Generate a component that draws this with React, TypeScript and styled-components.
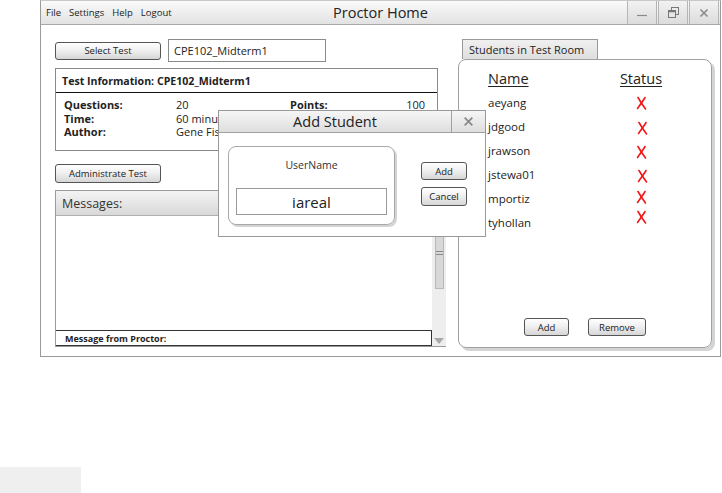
import React from "react";
import styled, { createGlobalStyle } from "styled-components";

const students = [
  { name: "aeyang", nudge: 2, shift: 0 },
  { name: "jdgood", nudge: 3, shift: 1 },
  { name: "jrawson", nudge: 3, shift: 0 },
  { name: "jstewa01", nudge: 3, shift: 1 },
  { name: "mportiz", nudge: 0, shift: 0 },
  { name: "tyhollan", nudge: -4, shift: 0 },
];

const GlobalStyle = createGlobalStyle`
  body {
    margin: 0;
    background: #ffffff;
    font-family: "Open Sans", "DejaVu Sans", sans-serif;
    color: #222;
  }
`;

const Page = styled.div`
  width: 722px;
  height: 493px;
  position: relative;
  overflow: hidden;
`;

const Window = styled.div`
  position: relative;
  margin-left: 40px;
  width: 681px;
  height: 357px;
  box-sizing: border-box;
  border: 1px solid #9a9a9a;
  border-top-color: #c8c8c8;
  background: #fff;
`;

const TitleBar = styled.div`
  height: 23px;
  display: grid;
  grid-template-columns: 1fr auto 1fr;
  background: linear-gradient(#fafafa, #e2e2e2);
  border-bottom: 1px solid #a8a8a8;
`;

const Menu = styled.div`
  display: flex;
  align-items: center;
  gap: 8px;
  padding-left: 5px;
  font-size: 9.5px;
  color: #222;
`;

const Title = styled.div`
  display: flex;
  align-items: center;
  justify-content: center;
  font-size: 14.5px;
  color: #222;
`;

const Controls = styled.div`
  justify-self: end;
  display: flex;
  gap: 1px;
  padding-right: 1px;
`;

const ControlButton = styled.div`
  width: 28px;
  display: flex;
  align-items: center;
  justify-content: center;
  border-left: 1px solid #b5b5b5;
  border-right: 1px solid #b5b5b5;
  background: linear-gradient(#f2f2f2, #dcdcdc);
`;

const Body = styled.div`
  display: flex;
  gap: 12px;
  padding: 14px 0 0 14px;
`;

const LeftCol = styled.div`
  width: 391px;
  display: flex;
  flex-direction: column;
`;

const TopRow = styled.div`
  display: flex;
  align-items: center;
  gap: 7px;
  height: 23px;
`;

const Button = styled.div<{ $w: number; $h?: number }>`
  width: ${(p) => p.$w}px;
  height: ${(p) => p.$h ?? 18}px;
  box-sizing: border-box;
  border: 1px solid #555;
  border-radius: 3px;
  background: linear-gradient(#ffffff 0%, #f0f0f0 45%, #d6d6d6 100%);
  display: flex;
  align-items: center;
  justify-content: center;
  font-size: 9.5px;
  color: #222;
`;

const TextInput = styled.div`
  width: 158px;
  height: 23px;
  box-sizing: border-box;
  border: 1px solid #8a8a8a;
  display: flex;
  align-items: center;
  padding-left: 5px;
  font-size: 11px;
`;

const InfoBox = styled.div`
  margin-top: 6px;
  width: 383px;
  height: 83px;
  box-sizing: border-box;
  border: 1px solid #8a8a8a;
`;

const InfoHeader = styled.div`
  height: 24px;
  box-sizing: border-box;
  border-bottom: 1px solid #111;
  display: flex;
  align-items: center;
  padding-left: 6px;
  font-weight: 700;
  font-size: 10.6px;
`;

const InfoGrid = styled.div`
  display: grid;
  grid-template-columns: 112px 114px 1fr auto;
  padding: 5px 12px 0 8px;
  font-size: 11px;
  line-height: 13.5px;
`;

const Label = styled.span`
  font-weight: 700;
`;

const Admin = styled.div`
  margin-top: 13px;
`;

const Messages = styled.div`
  margin-top: 7px;
  height: 157px;
  box-sizing: border-box;
  border: 1px solid #9a9a9a;
  border-right: none;
  display: flex;
  flex-direction: column;
`;

const MessagesHeader = styled.div`
  height: 24px;
  flex: none;
  background: linear-gradient(#f4f4f4, #d8d8d8);
  border-bottom: 1px solid #b0b0b0;
  display: flex;
  align-items: center;
  padding-left: 6px;
  font-size: 12.5px;
  color: #333;
`;

const MessagesBody = styled.div`
  flex: 1;
  display: flex;
`;

const MessagesMain = styled.div`
  flex: 1;
  display: flex;
  flex-direction: column;
  justify-content: flex-end;
`;

const ProctorInput = styled.div`
  height: 16px;
  box-sizing: border-box;
  border: 1px solid #333;
  border-left: none;
  display: flex;
  align-items: center;
  padding-left: 9px;
  font-size: 9px;
  font-weight: 700;
`;

const ScrollTrack = styled.div`
  width: 14px;
  background: #eeeeee;
  display: flex;
  flex-direction: column;
  align-items: center;
`;

const ScrollThumb = styled.div`
  margin-top: 1px;
  width: 9px;
  height: 72px;
  box-sizing: border-box;
  border: 1px solid #b8b8b8;
  background: #d8d8d8;
  display: flex;
  flex-direction: column;
  justify-content: center;
  gap: 2px;
  align-items: center;
`;

const Grip = styled.div`
  width: 7px;
  height: 1px;
  background: #888;
`;

const ScrollArrow = styled.div`
  margin-top: auto;
  margin-bottom: 2px;
  width: 0;
  height: 0;
  border-left: 5px solid transparent;
  border-right: 5px solid transparent;
  border-top: 6px solid #a8a8a8;
`;

const RightCol = styled.div`
  width: 254px;
  display: flex;
  flex-direction: column;
`;

const Tab = styled.div`
  margin-left: 4px;
  width: 136px;
  height: 20px;
  box-sizing: border-box;
  border: 1px solid #999;
  border-bottom: none;
  background: linear-gradient(#f0f0f0, #dedede);
  display: flex;
  align-items: center;
  padding-left: 6px;
  font-size: 11px;
  color: #222;
`;

const Panel = styled.div`
  height: 289px;
  box-sizing: border-box;
  border: 1px solid #a0a0a0;
  border-radius: 8px;
  box-shadow: 3px 3px 0 #d4d4d4;
  display: flex;
  flex-direction: column;
  padding: 7px 0 11px 29px;
`;

const StudentGrid = styled.div`
  display: grid;
  grid-template-columns: 131px 44px;
  grid-template-rows: 23px;
  grid-auto-rows: 24px;
  font-size: 11.5px;
  align-items: center;
`;

const ColHead = styled.div<{ $center?: boolean }>`
  font-size: 14.5px;
  text-decoration: underline;
  text-underline-offset: 2px;
  text-align: ${(p) => (p.$center ? "center" : "left")};
`;

const Status = styled.div<{ $nudge: number; $shift: number }>`
  display: flex;
  justify-content: center;
  transform: translate(${(p) => p.$shift}px, ${(p) => p.$nudge - 1}px);
`;

const PanelButtons = styled.div`
  margin-top: auto;
  display: flex;
  gap: 19px;
  justify-content: center;
  padding-right: 29px;
`;

const Dialog = styled.div`
  position: absolute;
  left: 177px;
  top: 109px;
  width: 268px;
  height: 127px;
  box-sizing: border-box;
  border: 1px solid #999;
  background: #fff;
  display: flex;
  flex-direction: column;
`;

const DialogBar = styled.div`
  height: 21px;
  display: flex;
  background: linear-gradient(#f6f6f6, #dedede);
  border-bottom: 1px solid #a0a0a0;
`;

const DialogTitle = styled.div`
  flex: 1;
  display: flex;
  align-items: center;
  justify-content: center;
  font-size: 14.5px;
  color: #222;
`;

const DialogClose = styled.div`
  width: 33px;
  border-left: 1px solid #a0a0a0;
  display: flex;
  align-items: center;
  justify-content: center;
`;

const DialogBody = styled.div`
  display: flex;
  padding: 13px 0 0 9px;
`;

const FieldBox = styled.div`
  width: 167px;
  height: 79px;
  box-sizing: border-box;
  border: 1px solid #a8a8a8;
  border-radius: 8px;
  box-shadow: 2px 2px 0 #d4d4d4;
  display: flex;
  flex-direction: column;
  align-items: center;
  padding-top: 11px;
`;

const FieldLabel = styled.div`
  font-size: 10.5px;
  color: #333;
  height: 20px;
`;

const FieldInput = styled.div`
  margin-top: 10px;
  width: 151px;
  height: 27px;
  box-sizing: border-box;
  border: 1px solid #999;
  display: flex;
  align-items: center;
  justify-content: center;
  font-size: 15px;
  color: #222;
`;

const DialogButtons = styled.div`
  margin-left: 26px;
  padding-top: 16px;
  display: flex;
  flex-direction: column;
  gap: 7px;
`;

const Stub = styled.div`
  position: absolute;
  left: 0;
  top: 467px;
  width: 81px;
  height: 26px;
  background: #efefef;
`;

const RedX = () => (
  <svg width="11" height="14" viewBox="0 0 11 14">
    <path d="M2 1.5 C4 5, 6.5 9, 9.5 13" stroke="#f01818" strokeWidth="1.6" fill="none" strokeLinecap="round" />
    <path d="M9 1.5 C7 5, 4 9, 1.5 12.5" stroke="#f01818" strokeWidth="1.6" fill="none" strokeLinecap="round" />
  </svg>
);

const CloseGlyph = ({ size = 10 }: { size?: number }) => (
  <svg width={size} height={size} viewBox="0 0 10 10">
    <path d="M1.5 1.5 L8.5 8.5 M8.5 1.5 L1.5 8.5" stroke="#8a8a8a" strokeWidth="1.6" />
  </svg>
);

export default function App() {
  return (
    <Page>
      <GlobalStyle />
      <Window>
        <TitleBar>
          <Menu>
            <span>File</span>
            <span>Settings</span>
            <span>Help</span>
            <span>Logout</span>
          </Menu>
          <Title>Proctor Home</Title>
          <Controls>
            <ControlButton>
              <svg width="10" height="10" viewBox="0 0 10 10">
                <path d="M0 7.5 H10" stroke="#8a8a8a" strokeWidth="1.2" />
              </svg>
            </ControlButton>
            <ControlButton>
              <svg width="11" height="11" viewBox="0 0 11 11">
                <rect x="3.5" y="0.5" width="7" height="7" fill="none" stroke="#777" />
                <rect x="0.5" y="3.5" width="7" height="7" fill="#e6e6e6" stroke="#777" />
                <path d="M0.5 4.5 H7.5" stroke="#777" strokeWidth="1.5" />
              </svg>
            </ControlButton>
            <ControlButton>
              <CloseGlyph />
            </ControlButton>
          </Controls>
        </TitleBar>

        <Body>
          <LeftCol>
            <TopRow>
              <Button $w={106}>Select Test</Button>
              <TextInput>CPE102_Midterm1</TextInput>
            </TopRow>
            <InfoBox>
              <InfoHeader>Test Information: CPE102_Midterm1</InfoHeader>
              <InfoGrid>
                <Label>Questions:</Label>
                <span>20</span>
                <Label>Points:</Label>
                <span>100</span>
                <Label>Time:</Label>
                <span>60 minutes</span>
                <span />
                <span />
                <Label>Author:</Label>
                <span>Gene Fisher</span>
                <span />
                <span />
              </InfoGrid>
            </InfoBox>
            <Admin>
              <Button $w={106} $h={19}>Administrate Test</Button>
            </Admin>
            <Messages>
              <MessagesHeader>Messages:</MessagesHeader>
              <MessagesBody>
                <MessagesMain>
                  <ProctorInput>Message from Proctor:</ProctorInput>
                </MessagesMain>
                <ScrollTrack>
                  <ScrollThumb>
                    <Grip />
                    <Grip />
                  </ScrollThumb>
                  <ScrollArrow />
                </ScrollTrack>
              </MessagesBody>
            </Messages>
          </LeftCol>

          <RightCol>
            <Tab>Students in Test Room</Tab>
            <Panel>
              <StudentGrid>
                <ColHead>Name</ColHead>
                <ColHead $center>Status</ColHead>
                {students.map((s) => (
                  <React.Fragment key={s.name}>
                    <div>{s.name}</div>
                    <Status $nudge={s.nudge} $shift={s.shift}>
                      <RedX />
                    </Status>
                  </React.Fragment>
                ))}
              </StudentGrid>
              <PanelButtons>
                <Button $w={45}>Add</Button>
                <Button $w={58}>Remove</Button>
              </PanelButtons>
            </Panel>
          </RightCol>
        </Body>

        <Dialog>
          <DialogBar>
            <DialogTitle>Add Student</DialogTitle>
            <DialogClose>
              <CloseGlyph size={11} />
            </DialogClose>
          </DialogBar>
          <DialogBody>
            <FieldBox>
              <FieldLabel>UserName</FieldLabel>
              <FieldInput>iareal</FieldInput>
            </FieldBox>
            <DialogButtons>
              <Button $w={46}>Add</Button>
              <Button $w={46} $h={19}>Cancel</Button>
            </DialogButtons>
          </DialogBody>
        </Dialog>
      </Window>
      <Stub />
    </Page>
  );
}
